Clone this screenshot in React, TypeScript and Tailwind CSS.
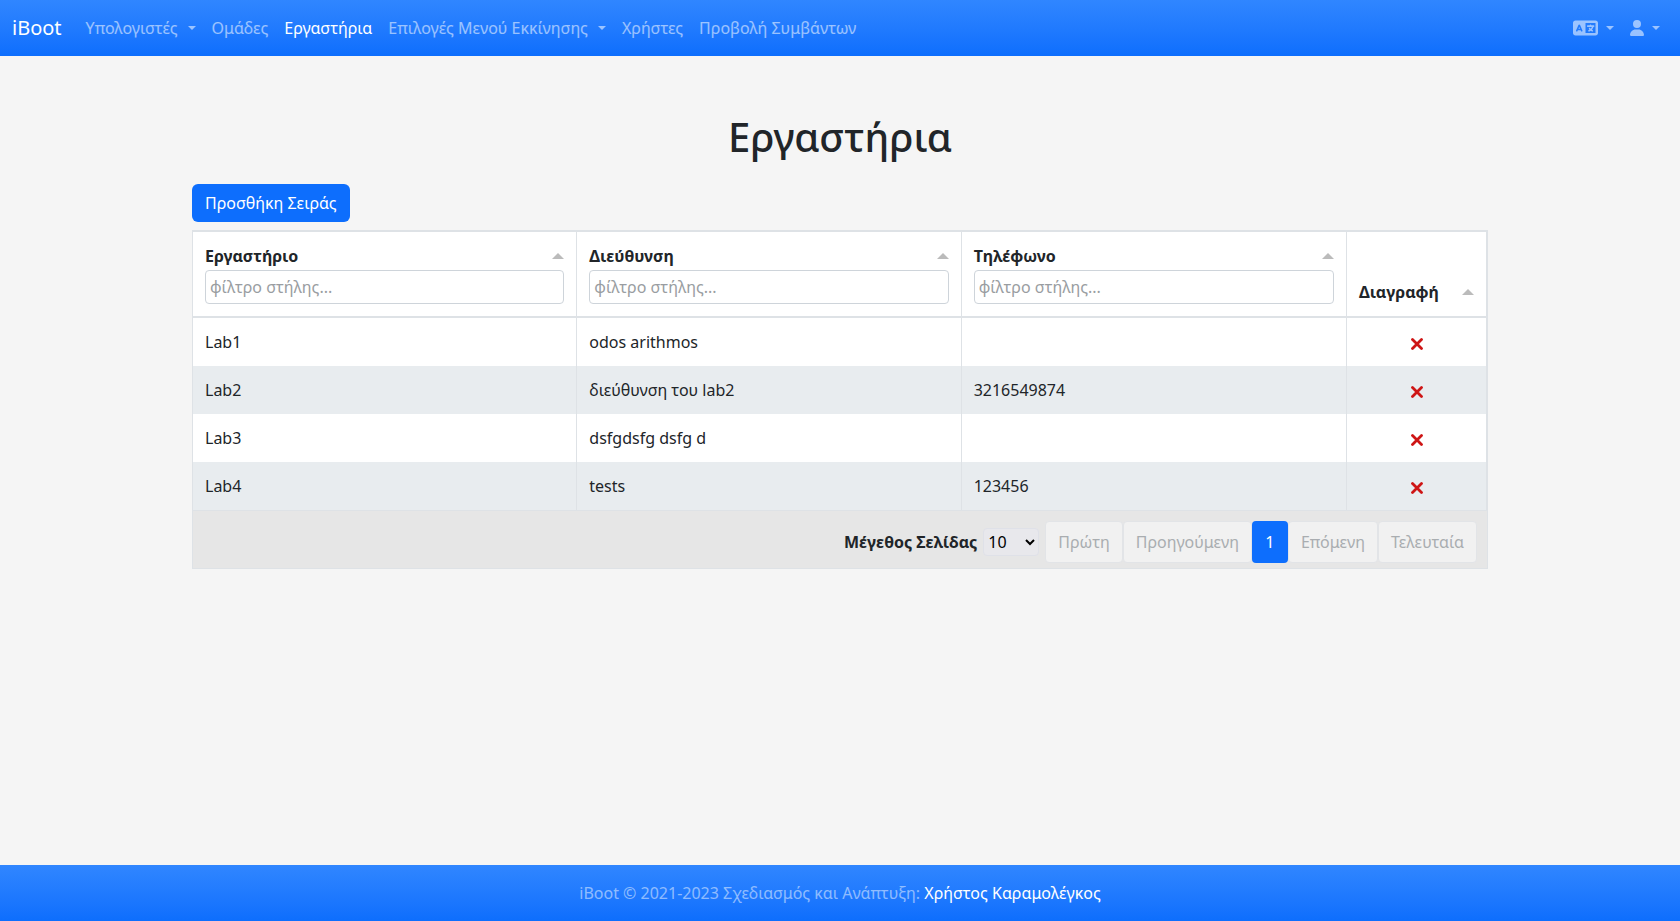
import { FaLanguage, FaUser } from "react-icons/fa6";

const columns = ["Εργαστήριο", "Διεύθυνση", "Τηλέφωνο"];

const labs = [
  { name: "Lab1", address: "odos arithmos", phone: "" },
  { name: "Lab2", address: "διεύθυνση του lab2", phone: "3216549874" },
  { name: "Lab3", address: "dsfgdsfg dsfg d", phone: "" },
  { name: "Lab4", address: "tests", phone: "123456" },
];

const navItems = [
  { label: "Υπολογιστές", menu: true },
  { label: "Ομάδες" },
  { label: "Εργαστήρια", active: true },
  { label: "Επιλογές Μενού Εκκίνησης", menu: true },
  { label: "Χρήστες" },
  { label: "Προβολή Συμβάντων" },
];

function Caret() {
  return (
    <svg viewBox="0 0 8 4" className="h-1 w-2 fill-current" aria-hidden="true">
      <path d="M0 0h8L4 4z" />
    </svg>
  );
}

function SortArrow() {
  return (
    <svg viewBox="0 0 12 6" className="h-1.5 w-3 fill-[#bbb]" aria-hidden="true">
      <path d="M0 6h12L6 0z" />
    </svg>
  );
}

function NavBar() {
  return (
    <nav className="flex min-h-14 items-center bg-linear-to-b from-[#3086ff] to-[#0d6efd] px-3 text-white/55">
      <a href="#home" className="mr-4 text-xl text-white">iBoot</a>
      <ul className="flex flex-1">
        {navItems.map((item) => (
          <li key={item.label}>
            <a
              href="#nav"
              className={
                item.active
                  ? "flex items-center gap-2.5 p-2 text-white"
                  : "flex items-center gap-2.5 p-2"
              }
            >
              {item.label}
              {item.menu && <Caret />}
            </a>
          </li>
        ))}
      </ul>
      <button type="button" aria-label="Γλώσσα" className="flex items-center gap-2 p-2">
        <FaLanguage className="h-5 w-[25px]" />
        <Caret />
      </button>
      <button type="button" aria-label="Λογαριασμός" className="flex items-center gap-2 p-2">
        <FaUser className="h-4 w-3.5" />
        <Caret />
      </button>
    </nav>
  );
}

function LabsTable() {
  return (
    <table className="w-full table-fixed border-separate border-spacing-0 border border-[#dee2e6] bg-white">
      <colgroup>
        <col className="w-[29.7%]" />
        <col className="w-[29.7%]" />
        <col />
        <col className="w-[140px]" />
      </colgroup>
      <thead>
        <tr>
          {columns.map((title) => (
            <th key={title} className="border-t border-r border-b-2 border-[#dee2e6] p-3 text-left font-bold">
              <div className="flex items-center justify-between">
                {title}
                <SortArrow />
              </div>
              <input
                type="search"
                aria-label={title}
                placeholder="φίλτρο στήλης..."
                className="mt-0.5 block h-[34px] w-full rounded-sm border border-[#ced4da] bg-white px-1 font-normal placeholder:text-[#999da1]"
              />
            </th>
          ))}
          <th className="border-t border-r border-b-2 border-[#dee2e6] p-3 text-left align-bottom font-bold">
            <div className="flex items-center justify-between">
              Διαγραφή
              <SortArrow />
            </div>
          </th>
        </tr>
      </thead>
      <tbody>
        {labs.map((lab) => (
          <tr key={lab.name} className="h-12 even:bg-[#e8ecef]">
            <td className="border-r border-[#dee2e6] px-3">{lab.name}</td>
            <td className="border-r border-[#dee2e6] px-3">{lab.address}</td>
            <td className="border-r border-[#dee2e6] px-3">{lab.phone}</td>
            <td className="border-r border-[#dee2e6] px-3 pt-1">
              <button type="button" aria-label={`Διαγραφή ${lab.name}`} className="mx-auto block">
                <svg viewBox="0 0 12 12" className="h-3 w-3" aria-hidden="true">
                  <path d="M1.500 1.500l9 9M10.500 1.500l-9 9" stroke="#ce1515" strokeWidth="2.800" strokeLinecap="round" />
                </svg>
              </button>
            </td>
          </tr>
        ))}
      </tbody>
    </table>
  );
}

const disabledPage = "h-[42px] rounded-sm border border-[#e2e4e7] bg-[#f1f1f1] px-3 text-[#a9adb0]";

function Pagination() {
  return (
    <div className="flex items-center justify-end border border-t-0 border-[#dee2e6] bg-[#e6e6e6] px-2.5 pt-2.5 pb-[5px]">
      <label htmlFor="page-size" className="mr-1.5 font-bold">Μέγεθος Σελίδας</label>
      <select
        id="page-size"
        defaultValue="10"
        className="mr-1.5 h-7 w-14 rounded-sm border border-[#dfe1e8] bg-[#e8e8ec] text-black"
      >
        <option>10</option>
        <option>20</option>
      </select>
      <div className="flex items-center">
        <button type="button" disabled className={disabledPage}>Πρώτη</button>
        <button type="button" disabled className={disabledPage}>Προηγούμενη</button>
        <button type="button" className="h-[42px] w-9 rounded-sm bg-[#0d6efd] text-white">1</button>
        <button type="button" disabled className={disabledPage}>Επόμενη</button>
        <button type="button" disabled className={disabledPage}>Τελευταία</button>
      </div>
    </div>
  );
}

export default function App() {
  return (
    <div className="flex min-h-screen flex-col bg-[#f5f5f5] font-['Noto_Sans',sans-serif] text-base text-[#212529]">
      <NavBar />
      <main className="mx-auto w-full max-w-[1320px] flex-1 px-3 pt-14">
        <h1 className="mb-[22px] text-center text-[40px] leading-[50px] font-medium">Εργαστήρια</h1>
        <button type="button" className="mb-2 block h-[38px] rounded-md bg-[#0d6efd] px-[13px] text-white">
          Προσθήκη Σειράς
        </button>
        <LabsTable />
        <Pagination />
      </main>
      <footer className="bg-linear-to-b from-[#3086ff] to-[#0d6efd] p-4 text-center text-white/50">
        iBoot © 2021-2023 Σχεδιασμός και Ανάπτυξη:{" "}
        <a href="#author" className="text-white">Χρήστος Καραμολέγκος</a>
      </footer>
    </div>
  );
}
